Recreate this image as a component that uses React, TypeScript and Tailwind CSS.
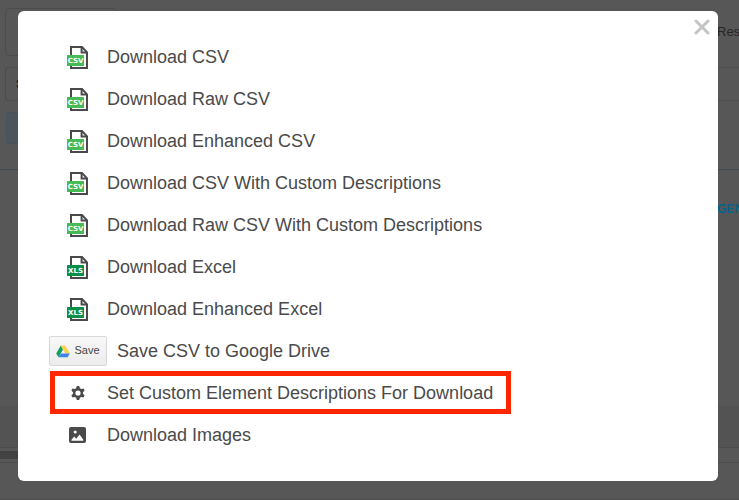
import React from "react";

type IconName = "csv" | "xls" | "drive" | "gear" | "image";

const items: { label: string; icon: IconName; highlighted?: boolean }[] = [
  { label: "Download CSV", icon: "csv" },
  { label: "Download Raw CSV", icon: "csv" },
  { label: "Download Enhanced CSV", icon: "csv" },
  { label: "Download CSV With Custom Descriptions", icon: "csv" },
  { label: "Download Raw CSV With Custom Descriptions", icon: "csv" },
  { label: "Download Excel", icon: "xls" },
  { label: "Download Enhanced Excel", icon: "xls" },
  { label: "Save CSV to Google Drive", icon: "drive" },
  { label: "Set Custom Element Descriptions For Download", icon: "gear", highlighted: true },
  { label: "Download Images", icon: "image" },
];

const FileIcon = ({ text, color }: { text: string; color: string }) => (
  <svg width="22" height="26" viewBox="0 0 22 26" aria-hidden="true">
    <path d="M4 3H15L20 8.4V24H4Z" fill="#fff" stroke="#4a4a4a" strokeWidth="2" />
    <path d="M14.6 3V8.6H20" fill="none" stroke="#4a4a4a" strokeWidth="2" />
    <rect x="0" y="11" width="17" height="11" rx="0.5" fill={color} />
    <text
      x="8.5"
      y="19"
      textAnchor="middle"
      fill="#fff"
      fontSize="7"
      fontWeight="700"
      fontFamily="'DejaVu Sans', 'Noto Sans', sans-serif"
    >
      {text}
    </text>
  </svg>
);

const DriveIcon = () => (
  <svg width="14" height="13" viewBox="0 0 14 13" aria-hidden="true">
    <path d="M4.8 0.5L0.2 8.4L2.5 12.3L7 4.4Z" fill="#12a15f" />
    <path d="M4.8 0.5H9.3L13.8 8.4H9.2Z" fill="#ffd04b" />
    <path d="M4.8 8.4H13.8L11.6 12.3H2.5Z" fill="#4083ec" />
  </svg>
);

const GearIcon = () => (
  <svg width="14" height="14" viewBox="0 0 14 14" aria-hidden="true">
    <path
      fill="#4a4a4a"
      fillRule="evenodd"
      d="M5.8 0H8.2L8.9 2.3L10.3 3L12.5 2.5L13.6 4.6L12 6.2V7.8L13.6 9.4L12.5 11.5L10.3 11L8.9 11.7L8.2 14H5.8L5.1 11.7L3.7 11L1.5 11.5L0.4 9.4L2 7.8V6.2L0.4 4.6L1.5 2.5L3.7 3L5.1 2.3ZM7 4.4A2.6 2.6 0 1 0 7 9.6A2.6 2.6 0 1 0 7 4.4Z"
    />
  </svg>
);

const ImageIcon = () => (
  <svg width="17" height="16" viewBox="0 0 17 16" aria-hidden="true">
    <rect width="17" height="16" rx="2" fill="#4a4a4a" />
    <circle cx="6.2" cy="5" r="1.6" fill="#fff" />
    <path d="M2.5 13.8V12.8L5.2 9.6L7.2 11.8L10.6 7.6L14.3 12.8V13.8Z" fill="#fff" />
  </svg>
);

const ItemIcon = ({ name }: { name: IconName }) => {
  if (name === "csv") return <FileIcon text="CSV" color="#45ba55" />;
  if (name === "xls") return <FileIcon text="XLS" color="#0a8f49" />;
  if (name === "gear") return <GearIcon />;
  return <ImageIcon />;
};

// Page content behind the dialog, already dimmed
const Backdrop = () => (
  <div className="flex min-h-screen flex-col bg-[#575757]">
    <div className="flex items-center justify-between pt-2 pl-[5px]">
      <div className="h-12 w-28 rounded border border-[#4c4c4c]"></div>
      <span className="w-[22px] text-[13px] text-[#262626]">Res</span>
    </div>
    <div className="mt-[11px] ml-[5px] flex h-[34px] items-center rounded-l border border-r-0 border-[#4c4c4c] pl-2.5 text-[13px] font-bold text-[#151515]">
      S
    </div>
    <div className="mt-[11px] ml-1.5 h-8 w-28 rounded-sm border border-[#435361] bg-[#4d555c]"></div>
    <div className="mt-[25px] border-t border-[#3d4953]"></div>
    <div className="mt-[29px] flex h-5 items-center justify-end">
      <span className="w-[22px] text-xs font-bold text-[#00658f]">GEN</span>
    </div>
    <div className="mt-[187px] h-[41px] bg-[#535353]"></div>
    <div className="border-y border-[#4c4c4c] py-[3px]">
      <div className="h-2 w-1/2 bg-[#424242]"></div>
    </div>
    <div className="grow border-b border-[#4c4c4c]"></div>
  </div>
);

const App = () => {
  return (
    <div className="h-screen overflow-hidden font-['Liberation_Sans',Arial,sans-serif]">
      <Backdrop />

      <div
        role="dialog"
        aria-label="Download"
        className="absolute top-[11px] right-[21px] left-[18px] rounded-md bg-white px-8 py-[25px]"
      >
        <button type="button" aria-label="Close" className="absolute top-2 right-2">
          <svg width="16" height="16" viewBox="0 0 16 16" aria-hidden="true">
            <path d="M2 2L14 14M14 2L2 14" stroke="#c4c4c4" strokeWidth="3" strokeLinecap="round" />
          </svg>
        </button>

        <ul className="text-lg text-[#4a4a4a]">
          {items.map((item) => (
            <li key={item.label} className="flex h-[42px]">
              {item.icon === "drive" ? (
                <div className="flex items-center gap-2.5">
                  <button
                    type="button"
                    className="-ml-px flex h-[30px] w-[58px] items-center justify-center gap-1 rounded-xs border border-[#d8d8d8] bg-linear-to-b from-[#f8f8f8] to-[#ececec] text-[11px] text-[#444]"
                  >
                    <DriveIcon />
                    Save
                  </button>
                  <span>{item.label}</span>
                </div>
              ) : (
                <button type="button" className="relative flex items-center pr-[18px] text-left">
                  {item.highlighted && (
                    <span className="absolute inset-x-0 -top-px bottom-0 border-5 border-[#ff2600]"></span>
                  )}
                  <span className="flex w-[57px] justify-center pr-0.5">
                    <ItemIcon name={item.icon} />
                  </span>
                  <span>{item.label}</span>
                </button>
              )}
            </li>
          ))}
        </ul>
      </div>
    </div>
  );
};

export default App;
